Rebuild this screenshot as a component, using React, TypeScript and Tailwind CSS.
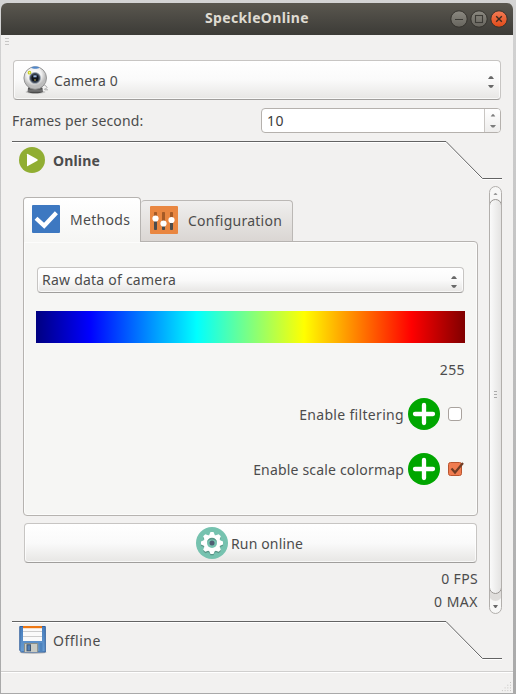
import React from "react";

function Arrows({ className = "" }: { className?: string }) {
  return (
    <svg width="6" height="14" viewBox="0 0 6 14" className={className}>
      <path d="M0 4h6L4 1.3H2z M0 10h6L4 12.7H2z" fill="#686868" />
    </svg>
  );
}

function Webcam() {
  return (
    <svg width="26" height="28" viewBox="0 0 26 28">
      <defs>
        <radialGradient id="ball" cx="45%" cy="35%">
          <stop offset="0" stopColor="#fff" />
          <stop offset=".65" stopColor="#f0f0f0" />
          <stop offset="1" stopColor="#bcbcbc" />
        </radialGradient>
        <linearGradient id="foot" x1="0" y1="0" x2="0" y2="1">
          <stop offset="0" stopColor="#333" />
          <stop offset=".65" stopColor="#777" />
          <stop offset="1" stopColor="#333" />
        </linearGradient>
      </defs>
      <ellipse cx="12.5" cy="26" rx="10" ry="1.8" fill="#000" opacity=".16" />
      <path d="M20 18.500c3 1 5 3 3.500 3.800s-3 .6-1.500 1.500h3" fill="none" stroke="#aaa" strokeWidth="1" />
      <path d="M5 22c0-2 14.500-2 14.500 0l.5 4c-3 1.800-12.500 1.800-15.500 0z" fill="url(#foot)" />
      <circle cx="12.2" cy="12" r="11.300" fill="url(#ball)" stroke="#8e8e8e" strokeWidth=".9" />
      <path d="M8.3 2c0-1.9 8-1.9 8 0-1.5 1-6.5 1-8 0z" fill="#5287c8" />
      <circle cx="6.5" cy="6.7" r="1.3" fill="#f8fac0" stroke="#c8cf20" strokeWidth="1.1" />
      <circle cx="12" cy="12" r="5.500" fill="#3e4959" stroke="#a5adb8" strokeWidth=".8" />
      <circle cx="12" cy="12" r="3.6" fill="#10141c" />
      <rect x="10.4" y="9.3" width="3.2" height="2" fill="#9cb7df" />
      <rect x="11" y="13.2" width="2" height="1.6" fill="#77703d" />
    </svg>
  );
}

function Play() {
  return (
    <svg width="26" height="26" viewBox="0 0 26 26">
      <circle cx="13" cy="13" r="13" fill="#91ae33" />
      <path d="M8 7.3v11.4q0 .8.8.4l9.5-5.4q1-.7 0-1.4L8.800 6.900q-.8-.4-.8.4z" fill="#fff" />
    </svg>
  );
}

function CheckTile() {
  return (
    <svg width="28" height="28" viewBox="0 0 28 28">
      <rect width="28" height="28" rx="1" fill="#3d78c1" />
      <path d="M4 13.200l8.200 7.500L24.400 7.800" fill="none" stroke="#fff" strokeWidth="4.200" />
    </svg>
  );
}

function SlidersTile() {
  return (
    <svg width="28" height="28" viewBox="0 0 28 28">
      <rect width="28" height="28" rx="1" fill="#e98640" />
      {[[5.5, 12.500], [13.500, 17.500], [21.500, 14]].map(([x, y]) => (
        <g key={x}>
          <rect x={x - 1.5} y="6" width="3" height={y - 6} rx=".8" fill="#a55a26" />
          <rect x={x - 1.5} y={y} width="3" height={24 - y} rx=".8" fill="#4c4c4c" />
          <circle cx={x} cy={y} r="3.100" fill="#fff" />
        </g>
      ))}
    </svg>
  );
}

function Plus() {
  return (
    <svg width="32" height="32" viewBox="0 0 32 32">
      <circle cx="16" cy="16" r="16" fill="#00a600" />
      <path d="M16 7v18M7 16h18" stroke="#fff" strokeWidth="4.300" strokeLinecap="round" />
    </svg>
  );
}

function Gear() {
  return (
    <svg width="32" height="32" viewBox="0 0 32 32">
      <circle cx="16" cy="16" r="16" fill="#76c2af" />
      {[1.300, 0].map((dy) => (
        <g key={dy} transform={`translate(16 ${16 + dy})`} fill={dy ? "#5a9587" : "#fff"}>
          <circle r="8.600" />
          {[0, 45, 90, 135, 180, 225, 270, 315].map((a) => (
            <path key={a} transform={`rotate(${a})`} d="M-3-7.500L-1.500-11h3L3-7.500z" />
          ))}
        </g>
      ))}
      <circle cx="16" cy="16" r="5" fill="#76c2af" />
      <path d="M11 15.800a5 5 0 0 1 10 0a5.200 4.500 0 0 0-10 0z" fill="#5a9587" />
      <circle cx="16" cy="16" r="2.500" fill="#4f5d73" />
    </svg>
  );
}

function Floppy() {
  return (
    <svg width="28" height="29" viewBox="0 0 28 29">
      <defs>
        <linearGradient id="disk" x1="0" y1="0" x2="0" y2="1">
          <stop offset="0" stopColor="#467dbd" />
          <stop offset="1" stopColor="#699cd1" />
        </linearGradient>
      </defs>
      <ellipse cx="14" cy="26.500" rx="13.500" ry="1.500" fill="#000" opacity=".2" />
      <path d="M.8.500h25.500v25.500H2.500L.8 24.500z" fill="url(#disk)" stroke="#315f9c" />
      <rect x="4" y="0" width="19" height="15" fill="#fafafa" />
      <rect x="4" y="0" width="19" height="2.200" fill="#ed7713" />
      <path d="M4 5.500h19M4 10.500h19" stroke="#ccc" />
      <path d="M5.500 26v-8.500h13.200V26" fill="#c9cbc4" stroke="#8a8e87" />
      <rect x="8" y="18.800" width="3.500" height="6" fill="#527fb4" stroke="#3d5675" />
      <rect x="20.500" y="17" width="3" height="9" fill="#4e83bd" />
    </svg>
  );
}

function Divider() {
  return (
    <svg width="490" height="40" viewBox="0 0 490 40" className="-mb-10 block shrink-0">
      <path d="M0 1.500H434L470.500 38.500H490" fill="none" stroke="#fff" />
      <path d="M0 .5H434L470.500 37.500H490" fill="none" stroke="#636363" />
    </svg>
  );
}

function WindowButton({ close, square }: { close?: boolean; square?: boolean }) {
  return (
    <svg width="18" height="18" viewBox="0 0 18 18">
      <defs>
        <linearGradient id="wgray" x1="0" y1="0" x2="0" y2="1"><stop stopColor="#8b8981" /><stop offset="1" stopColor="#66645d" /></linearGradient>
        <linearGradient id="wred" x1="0" y1="0" x2="0" y2="1"><stop stopColor="#f47b55" /><stop offset="1" stopColor="#df4a18" /></linearGradient>
      </defs>
      <circle cx="9" cy="9" r="8.200" fill={close ? "url(#wred)" : "url(#wgray)"} stroke="#34322d" />
      {close ? <path d="M6.200 6.200l5.600 5.600M11.800 6.200l-5.600 5.600" stroke="#3b2a20" strokeWidth="1.400" />
        : square ? <rect x="5.500" y="5.500" width="7" height="7" fill="none" stroke="#3c3b36" strokeWidth="1.100" />
        : <path d="M5 9.500h8" stroke="#3c3b36" strokeWidth="1.200" />}
    </svg>
  );
}

function OptionRow({ label, checked, tracking }: { label: string; checked?: boolean; tracking: string }) {
  return (
    <div className="flex h-8 items-center justify-end">
      <span className={`mr-1 pt-0.5 ${tracking}`}>{label}</span>
      <Plus />
      {checked ? (
        <svg width="16" height="16" viewBox="0 0 16 16" className="ml-2 mr-px">
          <rect x=".5" y="1.500" width="13" height="13" rx="2" fill="#f07c50" stroke="#b9552f" />
          <path d="M3.500 7.500l3.500 4L15 2" fill="none" stroke="#713d25" strokeWidth="2.200" />
        </svg>
      ) : (
        <span className="ml-2 mr-[3px] h-[14px] w-[14px] rounded-[3px] border border-[#a9a39e] bg-white" />
      )}
    </div>
  );
}

const button = "border border-[#c7c5c3] border-b-[#a09e9c] bg-linear-to-b from-white via-[#fafafa] to-[#e7e6e4] shadow-[inset_0_0_0_1px_rgba(255,255,255,0.7)]";

export default function App() {
  return (
    <div className="h-[694px] w-[516px] overflow-hidden bg-[#b8b8b8] bg-linear-to-b from-[#d4d4d4] to-[#a9a9a9] pt-[3px] pl-px font-['Noto_Sans',sans-serif] text-[14px] leading-5 whitespace-nowrap text-[#4c4c4c]">
      <div className="flex h-[690px] w-[512px] flex-col overflow-hidden rounded-t-[6px] bg-[#f2f1f0]">
        <header className="grid h-8 shrink-0 grid-cols-[1fr_auto_1fr] items-center bg-linear-to-b from-[#5a574f] to-[#3c3b37]">
          <span />
          <span className="-mt-0.5 font-bold tracking-[0.35px] text-[#dfdbd2]">SpeckleOnline</span>
          <div className="-mt-px flex justify-end gap-[2px] pr-[5px]"><WindowButton /><WindowButton square /><WindowButton close /></div>
        </header>
        <div className="flex h-[25px] shrink-0 flex-col gap-[2px] pt-[3px] pl-1">
          <span className="h-px w-1 bg-[#c8c7c6]" /><span className="h-px w-1 bg-[#c8c7c6]" /><span className="h-px w-1 bg-[#c8c7c6]" />
        </div>
        <div className={`ml-3 flex h-10 w-[488px] shrink-0 items-center rounded-[4px] ${button}`}>
          <span className="ml-[9px]"><Webcam /></span>
          <span className="ml-[5px] pt-0.5 tracking-[0.15px]">Camera 0</span>
          <Arrows className="mt-[3px] mr-[6px] ml-auto" />
        </div>
        <div className="mt-2 ml-[11px] flex h-[25px] w-[489px] shrink-0 items-center justify-between">
          <span className="tracking-[0.15px]">Frames per second:</span>
          <div className="flex h-[25px] w-[240px] items-center rounded-[4px] border border-[#b5b1ad] bg-white pl-[5px] text-[#3c3c3c]">
            <span className="tracking-[0.5px]">10</span>
            <span className="ml-auto flex h-full w-4 items-center justify-center rounded-r-[3px] border-l border-[#c9c6c3] bg-linear-to-b from-white to-[#eeedec]">
              <svg width="6" height="15" viewBox="0 0 6 15"><path d="M.7 3.500h4.600L3.700 1.300H2.300z M0 12h6l-2 2.500H2z" fill="#7c7c7c" /></svg>
            </span>
          </div>
        </div>
        <section className="mt-2 ml-[11px] flex h-[480px] w-[490px] shrink-0 flex-col">
          <Divider />
          <div className="flex h-[39px] items-center pl-[7px]"><span className="-mt-px"><Play /></span><span className="ml-2 font-bold tracking-[0.15px]">Online</span></div>
          <div className="mt-[6px] flex h-[428px] justify-between pl-[11px]">
            <div className="mt-[11px] flex w-[455px] flex-col">
              <div className="flex h-11 items-end">
                <div className="z-10 -mb-px flex h-[45px] w-[118px] items-center rounded-t-[4px] border border-b-0 border-[#b6b3b0] bg-linear-to-b from-white to-[#f6f6f4] pl-2">
                  <span className="-mt-[2px]"><CheckTile /></span><span className="ml-[10px] tracking-[0.3px]">Methods</span>
                </div>
                <div className="flex h-[41px] w-[152px] items-center rounded-t-[4px] border border-b-0 border-l-0 border-[#bbb8b5] bg-linear-to-b from-[#f0efee] to-[#dad6d3] pl-[9px]">
                  <span className="-mt-[2px]"><SlidersTile /></span><span className="ml-[10px] tracking-[0.25px]">Configuration</span>
                </div>
              </div>
              <div className="flex h-[275px] flex-col rounded-b-[4px] rounded-tr-[4px] border border-[#b6b3b0] bg-[#f6f6f4] pr-3 pl-3 shadow-[inset_0_0_0_1px_#fcfcfb]">
                <div className={`mt-[25px] ml-px flex h-[26px] w-[427px] items-center rounded-[4px] pr-[6px] pl-1 ${button}`}>
                  <span className="tracking-[0.23px]">Raw data of camera</span><Arrows className="mt-[3px] ml-auto" />
                </div>
                <div className="mt-[18px] h-8 w-[429px] bg-[linear-gradient(to_right,#000080_0%,#0000ff_12.5%,#00ffff_37.5%,#ffff00_62.5%,#ff0000_87.5%,#800000_100%)]" />
                <div className="mt-[17px] text-right tracking-[0.4px]">255</div>
                <div className="mt-[18px] flex flex-col gap-[23px]">
                  <OptionRow label="Enable filtering" tracking="tracking-[0.32px]" />
                  <OptionRow label="Enable scale colormap" tracking="tracking-[0.18px]" checked />
                </div>
              </div>
              <div className={`mt-[7px] ml-px flex h-10 w-[453px] items-center rounded-[4px] pl-[171px] ${button}`}>
                <Gear /><span className="ml-[3px] pt-0.5 tracking-[0.15px]">Run online</span>
              </div>
              <div className="mt-[6px] flex flex-col gap-[3px] text-right"><span className="tracking-[0.35px]">0 FPS</span><span className="tracking-[0.5px]">0 MAX</span></div>
            </div>
            <div className="flex w-[13px] flex-col overflow-hidden rounded-full border border-[#b2afac] bg-[#f7f7f6]">
              <svg width="11" height="12" viewBox="0 0 11 12" className="shrink-0"><path d="M3.500 8h4L6 6H5z" fill="#999" /></svg>
              <div className="-mx-px flex h-[395px] shrink-0 flex-col items-center justify-center gap-[2px] rounded-[7px] border border-[#979390] bg-linear-to-r from-[#fafafa] to-[#e4e3e2] pb-1 shadow-[0_7px_0_0_#dfdddb]">
                <span className="h-px w-[3px] bg-[#aaa]" /><span className="h-px w-[3px] bg-[#aaa]" /><span className="h-px w-[3px] bg-[#aaa]" />
              </div>
              <div className="flex h-[19px] shrink-0 items-end justify-center"><svg width="11" height="12" viewBox="0 0 11 12"><path d="M3 4h5L6 7H5z" fill="#686868" /></svg></div>
            </div>
          </div>
        </section>
        <section className="ml-[11px] flex h-[50px] w-[490px] shrink-0 flex-col">
          <Divider />
          <div className="flex h-[39px] items-center pl-[7px]"><Floppy /><span className="ml-[6px] tracking-[0.5px]">Offline</span></div>
        </section>
        <footer className="flex h-[22px] shrink-0 items-end justify-end border-t border-[#d0cfce] shadow-[inset_0_1px_0_#fff]">
          <svg width="12" height="12" viewBox="0 0 12 12">
            {[0, 1, 2, 3].flatMap((r) => Array.from({ length: r + 1 }, (_, c) => <rect key={`${r}-${c}`} x={9 - c * 2.700} y={1 + r * 2.700} width="1" height="1" fill="#c7c5c3" />))}
          </svg>
        </footer>
      </div>
    </div>
  );
}
